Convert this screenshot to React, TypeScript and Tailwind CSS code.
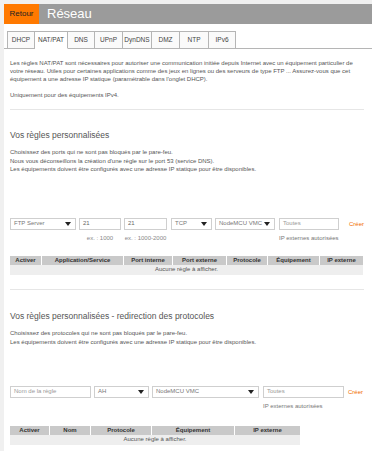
import React from "react";

const tabs = [
  { label: "DHCP", w: "w-[28px]" },
  { label: "NAT/PAT", w: "w-[33px]", active: true },
  { label: "DNS", w: "w-[27px]" },
  { label: "UPnP", w: "w-[28px]" },
  { label: "DynDNS", w: "w-[29px]" },
  { label: "DMZ", w: "w-[28px]" },
  { label: "NTP", w: "w-[29px]" },
  { label: "IPv6", w: "w-[27px]" },
];

function Caret() {
  return (
    <svg width="6" height="4" viewBox="0 0 6 4" className="shrink-0">
      <path d="M0 0h6L3 4z" fill="#222" />
    </svg>
  );
}

function Select({ label, className }: { label: string; className: string }) {
  return (
    <div className={`flex h-3 items-center justify-between border border-[#cfcfcf] bg-white pl-[3px] pr-[4px] text-[6px] text-[#777] ${className}`}>
      <span>{label}</span>
      <Caret />
    </div>
  );
}

function Input({ value, className, muted }: { value: string; className: string; muted?: boolean }) {
  return (
    <div className={`flex h-3 items-center border border-[#cfcfcf] bg-white pl-[3px] text-[6px] ${muted ? "text-[#999]" : "text-[#666]"} ${className}`}>
      {value}
    </div>
  );
}

function Table({ cols, width }: { cols: { label: string; w: string }[]; width: string }) {
  return (
    <div className={width}>
      <div className="flex h-[9px] gap-[1px] bg-white">
        {cols.map((c) => (
          <div key={c.label} className={`${c.w} flex items-center justify-center bg-[#c9c9c9] text-[6px] font-bold text-[#333]`}>
            {c.label}
          </div>
        ))}
      </div>
      <div className="flex h-[10px] items-center justify-center bg-[#eeeeee] text-[6px] text-[#555]">
        Aucune règle à afficher.
      </div>
    </div>
  );
}

export default function App() {
  return (
    <div className="h-[451px] w-[372px] overflow-hidden bg-[#f0f0f0] pl-1 pt-1 font-['Liberation_Sans',Arial,sans-serif]">
      <div className="h-full bg-white">
        {/* header */}
        <div className="flex h-5">
          <div className="flex w-[35px] items-center justify-center bg-[#ff7900] text-[8px] text-[#222]">Retour</div>
          <div className="flex flex-1 items-center bg-[#9b9b9b] pl-2 text-[13px] text-white">Réseau</div>
        </div>

        {/* tabs */}
        <div className="mt-[7px] flex h-[18px] border-b border-[#b5b5b5] pl-[3px]">
          {tabs.map((t) => (
            <div
              key={t.label}
              className={`${t.w} -mb-px flex items-center justify-center border border-l-0 first:border-l border-[#b5b5b5] text-[6.5px] text-[#444] ${
                t.active ? "border-b-white bg-white" : "bg-[#fafafa]"
              }`}
            >
              {t.label}
            </div>
          ))}
        </div>

        <div className="pl-[6px] pr-2 text-[#555]">
          <p className="mt-[10px] text-[6px] leading-[8px]">
            Les règles NAT/PAT sont nécessaires pour autoriser une communication initiée depuis Internet avec un équipement particulier de votre réseau. Utiles pour certaines applications comme des jeux en lignes ou des serveurs de type FTP ... Assurez-vous que cet équipement a une adresse IP statique (paramétrable dans l'onglet DHCP).
          </p>
          <p className="mt-[8px] text-[6px] leading-[8px]">Uniquement pour des équipements IPv4.</p>

          <div className="mt-[10px] h-px bg-[#e6e6e6]" />

          {/* section 1 */}
          <h2 className="mt-[19px] text-[8.5px] leading-[12px] text-[#555]">Vos règles personnalisées</h2>
          <div className="mt-[7px] text-[6px] leading-[8.5px]">
            <p>Choisissez des ports qui ne sont pas bloqués par le pare-feu.</p>
            <p>Nous vous déconseillons la création d'une règle sur le port 53 (service DNS).</p>
            <p>Les équipements doivent être configurés avec une adresse IP statique pour être disponibles.</p>
          </div>

          <div className="mt-[44px] flex items-start">
            <Select label="FTP Server" className="w-[66px]" />
            <div className="ml-[3px] flex w-[42px] flex-col items-center">
              <Input value="21" className="w-full" />
              <span className="mt-[4px] text-[6px] leading-[8px] text-[#888]">ex. : 1000</span>
            </div>
            <div className="ml-[3px] flex w-[43px] flex-col items-center">
              <Input value="21" className="w-full" />
              <span className="mt-[4px] text-[6px] leading-[8px] text-[#888]">ex. : 1000-2000</span>
            </div>
            <Select label="TCP" className="ml-[4px] w-[41px]" />
            <Select label="NodeMCU VMC" className="ml-[3px] w-[60px]" />
            <div className="ml-[4px] flex w-[60px] flex-col">
              <Input value="Toutes" muted className="w-full" />
              <span className="mt-[4px] text-[6px] leading-[8px] text-[#777]">IP externes autorisées</span>
            </div>
            <span className="ml-[10px] text-[6px] leading-[12px] text-[#f16e00]">Créer</span>
          </div>

          <div className="mt-[14px]">
            <Table
              width="w-[353px]"
              cols={[
                { label: "Activer", w: "w-[31px]" },
                { label: "Application/Service", w: "w-[81px]" },
                { label: "Port interne", w: "w-[48px]" },
                { label: "Port externe", w: "w-[53px]" },
                { label: "Protocole", w: "w-[40px]" },
                { label: "Équipement", w: "w-[51px]" },
                { label: "IP externe", w: "w-[43px]" },
              ]}
            />
          </div>

          <div className="mt-[14px] h-px bg-[#e6e6e6]" />

          {/* section 2 */}
          <h2 className="mt-[20px] text-[8.5px] leading-[12px] text-[#555]">Vos règles personnalisées - redirection des protocoles</h2>
          <div className="mt-[7px] text-[6px] leading-[9px]">
            <p>Choisissez des protocoles qui ne sont pas bloqués par le pare-feu.</p>
            <p>Les équipements doivent être configurés avec une adresse IP statique pour être disponibles.</p>
          </div>

          <div className="mt-[39px] flex items-start">
            <Input value="Nom de la règle" muted className="w-[81px]" />
            <Select label="AH" className="ml-[3px] w-[55px]" />
            <Select label="NodeMCU VMC" className="ml-[3px] w-[107px]" />
            <div className="ml-[4px] flex w-[81px] flex-col">
              <Input value="Toutes" muted className="w-full" />
              <span className="mt-[4px] text-[6px] leading-[8px] text-[#777]">IP externes autorisées</span>
            </div>
            <span className="ml-[4px] text-[6px] leading-[12px] text-[#f16e00]">Créer</span>
          </div>

          <div className="mt-[16px]">
            <Table
              width="w-[290px]"
              cols={[
                { label: "Activer", w: "w-[39px]" },
                { label: "Nom", w: "w-[40px]" },
                { label: "Protocole", w: "w-[60px]" },
                { label: "Équipement", w: "w-[82px]" },
                { label: "IP externe", w: "w-[65px]" },
              ]}
            />
          </div>
        </div>
      </div>
    </div>
  );
}
